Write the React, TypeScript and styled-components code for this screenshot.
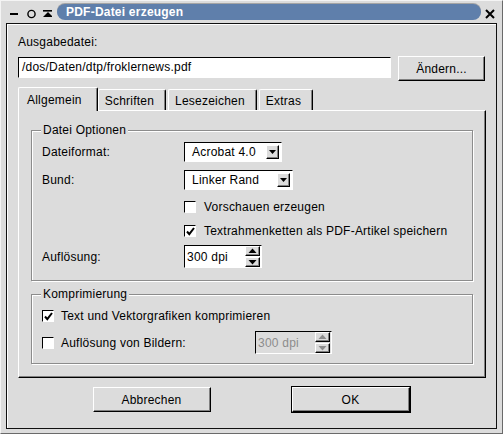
import React from "react";
import styled, { createGlobalStyle, css } from "styled-components";

const Global = createGlobalStyle`
  html, body { margin: 0; padding: 0; background: #dcdcdc; }
  body { font-family: "Liberation Sans", Arial, sans-serif; font-size: 12px; color: #000; letter-spacing: 0.22px; }
  * { box-sizing: border-box; }
`;

const raised = css`
  border: 1px solid;
  border-color: #ffffff #000000 #000000 #ffffff;
  box-shadow: inset -1px -1px 0 #808080;
`;

const sunken = css`
  border: 1px solid;
  border-color: #000000 #ffffff #ffffff #000000;
`;

const Window = styled.div`
  width: 503px;
  height: 434px;
  display: flex;
  flex-direction: column;
  background: #dcdcdc;
  border: 1px solid;
  border-color: #f4f4f4 #6a6a6a #6a6a6a #f4f4f4;
  padding: 0 5px 4px 5px;
`;

const TitleBar = styled.div`
  height: 22px;
  display: flex;
  align-items: center;
  padding: 0 2px 0 2px;
`;

const TitleIcon = styled.svg`
  display: block;
  flex: none;
`;

const TitlePill = styled.div`
  flex: 1;
  height: 16px;
  margin: 0 4px 0 5px;
  border-radius: 8px;
  background: #5f7fab;
  box-shadow: 0 -1px 0 #a4a4a4;
  color: #ffffff;
  font-weight: bold;
  font-size: 12px;
  line-height: 16px;
  padding-left: 9px;
  white-space: nowrap;
`;

const Frame = styled.div`
  flex: 1;
  border: 1px solid #101010;
  box-shadow: inset 1px 1px 0 #ffffff;
  display: flex;
  flex-direction: column;
  padding: 0 10px 0 11px;
`;

const Label = styled.div`
  line-height: 14px;
  white-space: nowrap;
`;

const TopLabel = styled(Label)`
  margin-top: 11px;
`;

const FileRow = styled.div`
  display: flex;
  align-items: flex-start;
  gap: 7px;
  margin-top: 7px;
  height: 25px;
  padding-right: 1px;
`;

const TextInput = styled.div`
  ${sunken};
  flex: 1;
  height: 21px;
  margin-top: 1px;
  background: #ffffff;
  line-height: 19px;
  padding-left: 3px;
  white-space: nowrap;
`;

const PushButton = styled.div<{ $w: number; $default?: boolean }>`
  ${raised};
  width: ${(p) => p.$w}px;
  height: 25px;
  display: flex;
  align-items: center;
  justify-content: center;
  background: #dcdcdc;
  white-space: nowrap;
  ${(p) => p.$default && css`outline: 1px solid #000; outline-offset: 0;`}
`;

const TabBar = styled.div`
  display: flex;
  align-items: flex-end;
  gap: 2px;
  height: 23px;
  margin-top: 6px;
  padding-left: 2px;
`;

const Tab = styled.div<{ $active?: boolean }>`
  position: relative;
  border-top: 1px solid #ffffff;
  border-left: 1px solid #ffffff;
  border-right: 1px solid #000000;
  box-shadow: inset -1px 0 0 #808080;
  border-radius: 2px 2px 0 0;
  background: #dcdcdc;
  white-space: nowrap;
  display: flex;
  align-items: center;
  ${(p) =>
    p.$active
      ? css`
          height: 24px;
          margin: 0 -2px -1px -2px;
          padding: 0 15px 0 8px;
          z-index: 2;
        `
      : css`
          height: 21px;
          padding: 1px 11px 0 6px;
        `}
`;

const Pane = styled.div`
  height: 268px;
  border: 1px solid;
  border-color: #ffffff #000000 #000000 #ffffff;
  box-shadow: inset -1px -1px 0 #808080;
  padding: 12px 12px 0 12px;
  display: flex;
  flex-direction: column;
`;

const Group = styled.fieldset<{ $mt?: number }>`
  margin: ${(p) => p.$mt ?? 0}px 0 0 0;
  padding: 0;
  border: 1px solid #8c8c8c;
  box-shadow: 1px 1px 0 #ffffff, inset 1px 1px 0 #ffffff;
  min-width: 0;
`;

const Legend = styled.legend`
  margin-left: 9px;
  padding: 0 2px;
  line-height: 14px;
  background: #dcdcdc;
`;

const OptionsGrid = styled.div`
  display: grid;
  grid-template-columns: 142px auto;
  align-items: center;
  padding: 5px 0 12px 10px;
`;

const GridRow = styled.div<{ $h: number; $mt?: number }>`
  display: contents;
  & > * {
    height: ${(p) => p.$h}px;
    margin-top: ${(p) => p.$mt ?? 0}px;
  }
`;

const Cell = styled.div`
  display: flex;
  align-items: center;
  white-space: nowrap;
`;

const Combo = styled.div<{ $w: number }>`
  ${sunken};
  width: ${(p) => p.$w}px;
  height: 20px;
  background: #ffffff;
  display: flex;
  align-items: center;
  justify-content: space-between;
  padding: 0 2px 0 7px;
  white-space: nowrap;
`;

const ArrowButton = styled.div`
  ${raised};
  width: 13px;
  height: 14px;
  display: flex;
  align-items: center;
  justify-content: center;
  background: #dcdcdc;
`;

const Spin = styled.div<{ $w: number; $disabled?: boolean }>`
  ${sunken};
  width: ${(p) => p.$w}px;
  height: 23px;
  background: ${(p) => (p.$disabled ? "#dcdcdc" : "#ffffff")};
  color: ${(p) => (p.$disabled ? "#8c8c8c" : "#000")};
  display: flex;
  align-items: center;
  justify-content: space-between;
  padding: 0 1px 0 2px;
  white-space: nowrap;
`;

const SpinButtons = styled.div`
  display: flex;
  flex-direction: column;
  gap: 1px;
`;

const SpinButton = styled.div`
  ${raised};
  width: 15px;
  height: 10px;
  display: flex;
  align-items: center;
  justify-content: center;
  background: #dcdcdc;
`;

const CheckRow = styled.div<{ $gap: number }>`
  display: flex;
  align-items: center;
  gap: ${(p) => p.$gap}px;
  white-space: nowrap;
`;

const Box = styled.div`
  ${sunken};
  width: 12px;
  height: 12px;
  background: #ffffff;
  display: flex;
  align-items: center;
  justify-content: center;
  flex: none;
`;

const CompressGrid = styled.div`
  display: grid;
  grid-template-columns: 213px auto;
  align-items: center;
  padding: 7px 0 9px 10px;
`;

const ButtonRow = styled.div`
  display: flex;
  justify-content: center;
  gap: 81px;
  margin-top: 9px;
  padding-right: 2px;
`;

const DownTri = ({ color = "#000" }: { color?: string }) => (
  <svg width="7" height="5" viewBox="0 0 7 5">
    <polygon points="0,0 7,0 3.5,4" fill={color} />
  </svg>
);

const UpArrow = ({ color = "#000" }: { color?: string }) => (
  <svg width="9" height="6" viewBox="0 0 9 6">
    <polygon points="0.5,5 8.5,5 4.5,0.5" fill={color} />
  </svg>
);

const DownArrow = ({ color = "#000" }: { color?: string }) => (
  <svg width="9" height="6" viewBox="0 0 9 6">
    <polygon points="0.5,1 8.5,1 4.5,5.5" fill={color} />
  </svg>
);

const Check = () => (
  <svg width="9" height="9" viewBox="0 0 9 9">
    <polyline points="1,4.5 3.3,7.2 8,1" fill="none" stroke="#000" strokeWidth="2" />
  </svg>
);

const CheckBox = ({ checked }: { checked?: boolean }) => <Box>{checked && <Check />}</Box>;

const SpinBox = ({ w, value, disabled }: { w: number; value: string; disabled?: boolean }) => {
  const c = disabled ? "#8c8c8c" : "#000";
  return (
    <Spin $w={w} $disabled={disabled}>
      <span>{value}</span>
      <SpinButtons>
        <SpinButton>
          <UpArrow color={c} />
        </SpinButton>
        <SpinButton>
          <DownArrow color={c} />
        </SpinButton>
      </SpinButtons>
    </Spin>
  );
};

export default function App() {
  return (
    <>
      <Global />
      <Window>
        <TitleBar>
          <TitleIcon width="44" height="22" viewBox="0 0 44 22">
            <rect x="2" y="12" width="8" height="2" fill="#000" />
            <circle cx="23.5" cy="13" r="3.6" fill="none" stroke="#000" strokeWidth="1.4" />
            <rect x="35" y="9" width="10" height="1.6" fill="#000" />
            <polygon points="35,16 45,16 40,11" fill="#000" />
          </TitleIcon>
          <TitlePill>PDF-Datei erzeugen</TitlePill>
          <TitleIcon width="10" height="22" viewBox="0 0 10 22">
            <path d="M1 9 L9 17 M9 9 L1 17" stroke="#000" strokeWidth="2" />
          </TitleIcon>
        </TitleBar>
        <Frame>
          <TopLabel>Ausgabedatei:</TopLabel>
          <FileRow>
            <TextInput>/dos/Daten/dtp/froklernews.pdf</TextInput>
            <PushButton $w={87}>Ändern...</PushButton>
          </FileRow>
          <TabBar>
            <Tab $active>Allgemein</Tab>
            <Tab>Schriften</Tab>
            <Tab>Lesezeichen</Tab>
            <Tab>Extras</Tab>
          </TabBar>
          <Pane>
            <Group>
              <Legend>Datei Optionen</Legend>
              <OptionsGrid>
                <GridRow $h={20}>
                  <Cell>Dateiformat:</Cell>
                  <Cell>
                    <Combo $w={98}>
                      <span>Acrobat 4.0</span>
                      <ArrowButton>
                        <DownTri />
                      </ArrowButton>
                    </Combo>
                  </Cell>
                </GridRow>
                <GridRow $h={20} $mt={8}>
                  <Cell>Bund:</Cell>
                  <Cell>
                    <Combo $w={109}>
                      <span>Linker Rand</span>
                      <ArrowButton>
                        <DownTri />
                      </ArrowButton>
                    </Combo>
                  </Cell>
                </GridRow>
                <GridRow $h={18} $mt={8}>
                  <Cell />
                  <CheckRow $gap={8}>
                    <CheckBox />
                    <span>Vorschauen erzeugen</span>
                  </CheckRow>
                </GridRow>
                <GridRow $h={18} $mt={6}>
                  <Cell />
                  <CheckRow $gap={8}>
                    <CheckBox checked />
                    <span>Textrahmenketten als PDF-Artikel speichern</span>
                  </CheckRow>
                </GridRow>
                <GridRow $h={23} $mt={5}>
                  <Cell>Auflösung:</Cell>
                  <Cell>
                    <SpinBox w={78} value="300 dpi" />
                  </Cell>
                </GridRow>
              </OptionsGrid>
            </Group>
            <Group $mt={6}>
              <Legend>Komprimierung</Legend>
              <CompressGrid>
                <GridRow $h={16}>
                  <CheckRow $gap={7}>
                    <CheckBox checked />
                    <span>Text und Vektorgrafiken komprimieren</span>
                  </CheckRow>
                  <Cell />
                </GridRow>
                <GridRow $h={23} $mt={7}>
                  <CheckRow $gap={7}>
                    <CheckBox />
                    <span>Auflösung von Bildern:</span>
                  </CheckRow>
                  <Cell>
                    <SpinBox w={77} value="300 dpi" disabled />
                  </Cell>
                </GridRow>
              </CompressGrid>
            </Group>
          </Pane>
          <ButtonRow>
            <PushButton $w={118}>Abbrechen</PushButton>
            <PushButton $w={118} $default>
              OK
            </PushButton>
          </ButtonRow>
        </Frame>
      </Window>
    </>
  );
}
